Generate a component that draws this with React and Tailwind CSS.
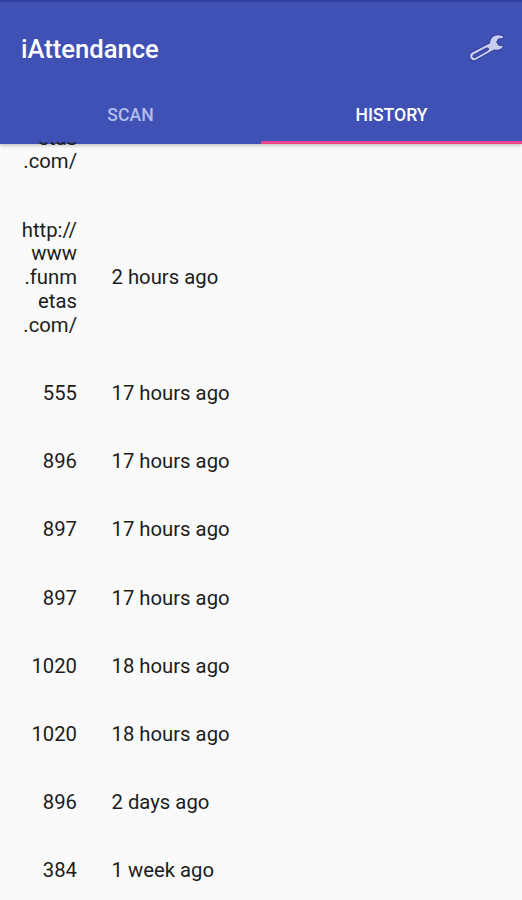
import React, { useState } from 'react';

const scans = [
  { id: 1, code: ['etas', '.com/'], time: '' },
  { id: 2, code: ['http://', 'www', '.funm', 'etas', '.com/'], time: '2 hours ago' },
  { id: 3, code: ['555'], time: '17 hours ago' },
  { id: 4, code: ['896'], time: '17 hours ago' },
  { id: 5, code: ['897'], time: '17 hours ago' },
  { id: 6, code: ['897'], time: '17 hours ago' },
  { id: 7, code: ['1020'], time: '18 hours ago' },
  { id: 8, code: ['1020'], time: '18 hours ago' },
  { id: 9, code: ['896'], time: '2 days ago' },
  { id: 10, code: ['384'], time: '1 week ago' },
];

const WrenchIcon = () => (
  <svg width="36" height="28" viewBox="0 0 36 28" fill="none">
    <path
      d="M34.4 2C30.6 0.4 25.6 0.6 22.8 3C20.8 4.8 20.7 7 20.6 8.8L3 18C0.4 19.4 0 22.2 1.2 24.4C2.4 26.9 4.8 27.4 7 26.2L25.2 16C29 17 33.6 15.6 35 11.4L29.8 11.2L27.8 8L29.6 5L34.4 4.6Z"
      fill="#c9cdf0"
      stroke="#313d9c"
      strokeWidth="1.1"
    />
    <path
      d="M4.6 20.9L17.4 14.1C19.4 13.3 20.6 15.3 18.9 16.3L6.2 23.5C4.2 24.4 2.8 21.9 4.6 20.9Z"
      fill="#4552b8"
      stroke="#2c3690"
      strokeWidth="1"
    />
  </svg>
);

const App = () => {
  const [tab, setTab] = useState('HISTORY');

  return (
    <div className="flex h-[900px] w-[522px] flex-col overflow-hidden bg-[#fafafa] font-['Roboto',sans-serif]">
      {/* App bar */}
      <header className="flex h-[144px] shrink-0 flex-col border-t-2 border-[#303f9f] bg-[#3f51b5] shadow-[0_1px_4px_rgba(0,0,0,0.3)]">
        <div className="flex h-[86px] items-center justify-between pt-2 pr-[17px] pl-[21px]">
          <h1 className="text-[25.6px] font-medium text-white">iAttendance</h1>
          <button aria-label="Settings" className="pb-0.5">
            <WrenchIcon />
          </button>
        </div>

        {/* Tabs */}
        <nav className="grid flex-1 grid-cols-2">
          {['SCAN', 'HISTORY'].map((name) => (
            <button
              key={name}
              onClick={() => setTab(name)}
              className={`border-b-[3px] pt-px text-[17.6px] font-medium ${
                tab === name ? 'border-[#ec4587] text-white' : 'border-transparent text-[#b3bdf0]'
              }`}
            >
              {name}
            </button>
          ))}
        </nav>
      </header>

      {/* Scan history */}
      <main className="z-10 -mt-[2px] flex-1 overflow-hidden text-[20.3px] leading-[23.8px] text-[#1c1c1c]">
        <div className="-mt-[37.5px]">
          {scans.map((scan) => (
            <div key={scan.id} className="flex items-center py-[22.2px] pl-[20px]">
              <div className="w-[57px] text-right">
                {scan.code.map((line) => (
                  <p key={line}>{line}</p>
                ))}
              </div>
              {scan.time && <p className="ml-[34.5px]">{scan.time}</p>}
            </div>
          ))}
        </div>
      </main>
    </div>
  );
};

export default App;
